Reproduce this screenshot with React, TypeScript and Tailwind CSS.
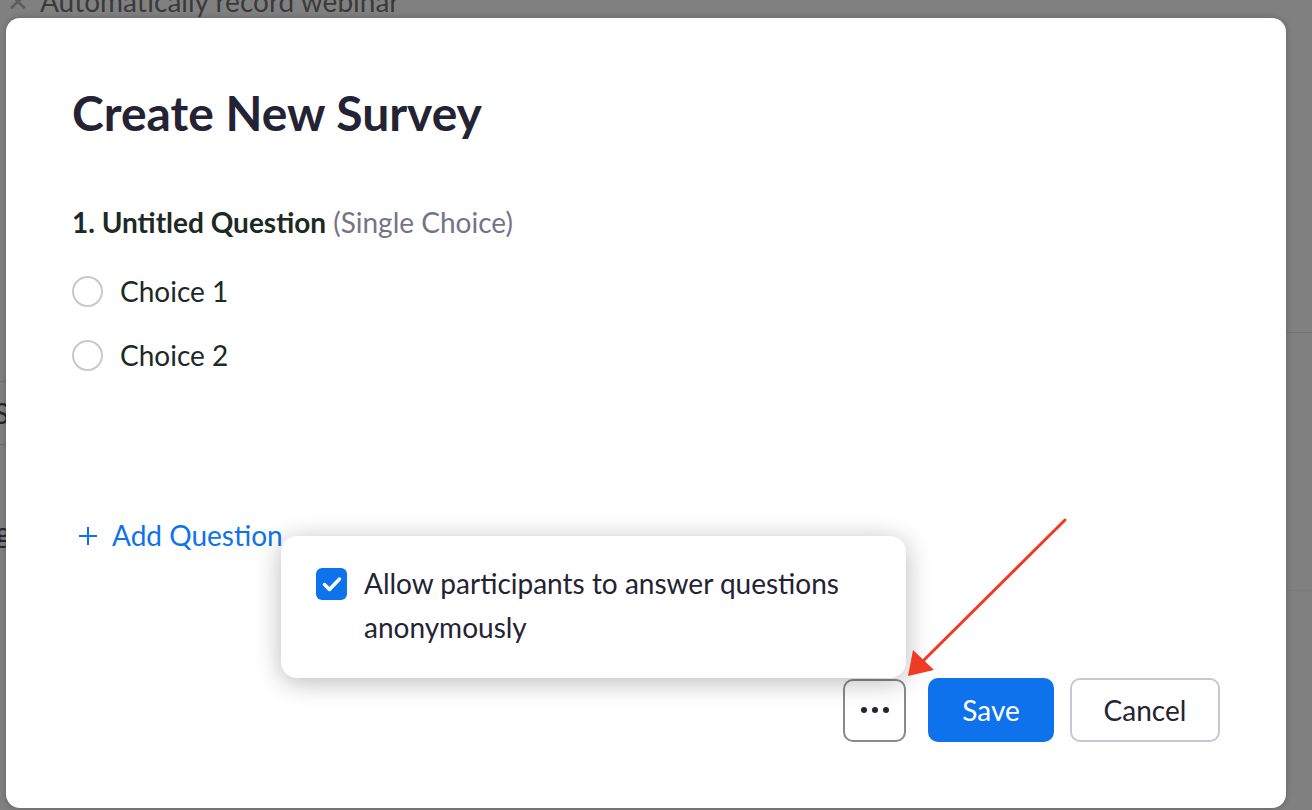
import React from "react";

function Radio() {
  return <span className="w-[31px] h-[31px] rounded-full border-2 border-[#c8c6d6] bg-white shrink-0" />;
}

export default function App() {
  return (
    <div className="relative w-[1312px] h-[810px] overflow-hidden bg-[#808080]" style={{ fontFamily: "Lato, 'Noto Sans', sans-serif" }}>
      {/* page behind the overlay */}
      <div className="flex items-center gap-[11px] pl-[7px] mt-[-15px] h-[32px] text-[28px] leading-[32px] text-[#3a3a3a]">
        <span className="text-[#5c5c5c] text-[26px]">✕</span>
        <span>Automatically record webinar</span>
      </div>
      <div className="absolute left-0 top-[381px] w-[10px] h-[64px] border-y border-[#6c6c6c] flex items-center">
        <span className="text-[28px] text-[#262626] ml-[-6px]">S</span>
      </div>
      <div className="absolute left-0 top-[516px] text-[28px] leading-[32px] text-[#262626] ml-[-4px]">g</div>
      <div className="absolute right-0 top-[332px] w-[30px] border-t border-[#727272]" />
      <div className="absolute right-0 top-[590px] w-[30px] border-t border-[#7a7a7a]" />

      {/* dialog */}
      <div className="absolute left-[6px] top-[18px] w-[1280px] h-[790px] rounded-[14px] bg-white shadow-[0_0_6px_rgba(0,0,0,0.25)] flex flex-col pl-[66px] pr-[66px] pt-[67px] pb-[66px]">
        <h1 className="text-[48px] leading-[56px] font-bold text-[#232333]">Create New Survey</h1>

        <div className="mt-[63px] text-[28px] leading-[36px] text-[#1c2a25]">
          <span className="font-bold">1. Untitled Question</span>{" "}
          <span className="text-[#747487]">(Single Choice)</span>
        </div>

        <div className="mt-[19px] flex flex-col">
          <div className="h-[64px] flex items-center gap-[17px] text-[28px] leading-[36px] text-[#1c2a25]">
            <Radio />
            <span>Choice 1</span>
          </div>
          <div className="h-[64px] flex items-center gap-[17px] text-[28px] leading-[36px] text-[#1c2a25]">
            <Radio />
            <span>Choice 2</span>
          </div>
        </div>

        <div className="mt-[130px] flex items-center gap-[14px] text-[28px] leading-[36px] text-[#0e72ed] pl-[6px]">
          <svg width="20" height="20" viewBox="0 0 20 20" className="mt-[2px]">
            <path d="M10 1v18M1 10h18" stroke="#0e72ed" strokeWidth="2" />
          </svg>
          <span>Add Question</span>
        </div>

        <div className="mt-auto flex justify-end items-center">
          <button className="w-[63px] h-[63px] rounded-[10px] border-2 border-[#8a8a8a] flex items-center justify-center gap-[5px]">
            <span className="w-[6px] h-[6px] rounded-full bg-[#232333]" />
            <span className="w-[6px] h-[6px] rounded-full bg-[#232333]" />
            <span className="w-[6px] h-[6px] rounded-full bg-[#232333]" />
          </button>
          <button className="ml-[22px] w-[126px] h-[64px] rounded-[10px] bg-[#0e72ed] text-white text-[28px]">Save</button>
          <button className="ml-[16px] w-[150px] h-[64px] rounded-[10px] border-2 border-[#c8c6d6] text-[#232333] text-[28px]">Cancel</button>
        </div>

        {/* popover */}
        <div className="absolute left-[275px] top-[518px] w-[625px] h-[142px] rounded-[16px] bg-white shadow-[0_4px_26px_rgba(0,0,0,0.28)] flex items-start pl-[35px] pt-[25px] gap-[17px]">
          <span className="mt-[7px] w-[31px] h-[32px] rounded-[6px] bg-[#0e72ed] flex items-center justify-center shrink-0">
            <svg width="20" height="16" viewBox="0 0 20 16">
              <path d="M2.5 8.5l5 5L17.5 3" stroke="white" strokeWidth="3.5" fill="none" strokeLinecap="round" strokeLinejoin="round" />
            </svg>
          </span>
          <p className="w-[510px] text-[28px] leading-[44px] text-[#232333]">Allow participants to answer questions anonymously</p>
        </div>
      </div>

      {/* annotation arrow */}
      <svg className="absolute left-0 top-0" width="1312" height="810" viewBox="0 0 1312 810">
        <line x1="1065" y1="520" x2="922" y2="662" stroke="#ef3b24" strokeWidth="3" strokeLinecap="round" />
        <polygon points="908,676 913,650 934,670" fill="#ef3b24" />
      </svg>
    </div>
  );
}
